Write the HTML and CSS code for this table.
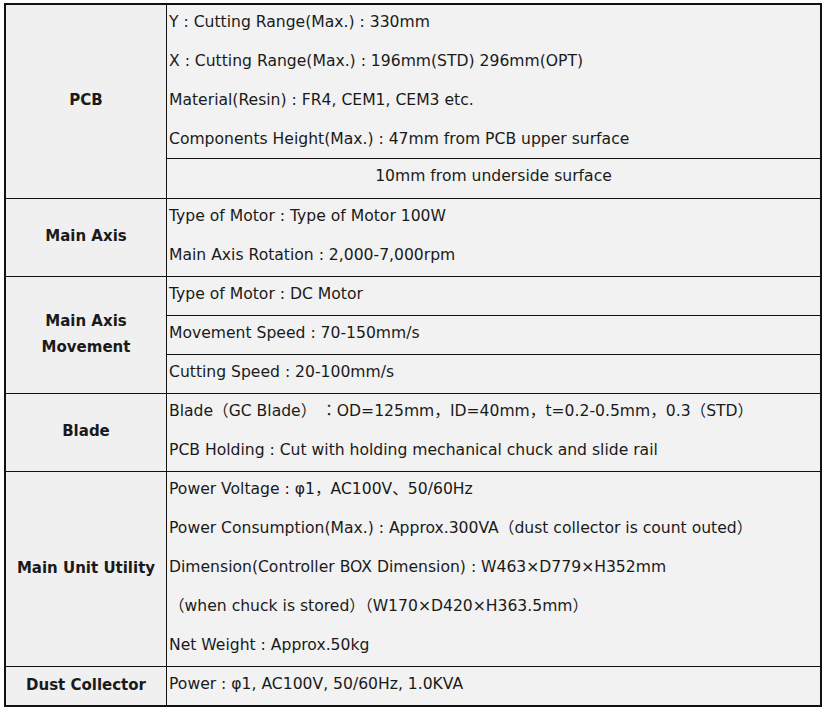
FILE: index.html
```html
<!DOCTYPE html>
<html>
<head>
<meta charset="utf-8">
<link rel="stylesheet" href="styles.css">
</head>
<body>
<table class="spec">
  <tr>
    <th rowspan="2">PCB</th>
    <td class="first">
      <div class="ln">Y : Cutting Range(Max.) : 330mm</div>
      <div class="ln">X : Cutting Range(Max.) : 196mm(STD) 296mm(OPT)</div>
      <div class="ln">Material(Resin) : FR4, CEM1, CEM3 etc.</div>
      <div class="ln">Components Height(Max.) : 47mm from PCB upper surface</div>
    </td>
  </tr>
  <tr>
    <td class="center"><div class="ln">10mm from underside surface</div></td>
  </tr>
  <tr>
    <th>Main Axis</th>
    <td>
      <div class="ln">Type of Motor : Type of Motor 100W</div>
      <div class="ln">Main Axis Rotation : 2,000-7,000rpm</div>
    </td>
  </tr>
  <tr>
    <th rowspan="3" class="wrap">Main Axis<br>Movement</th>
    <td><div class="ln">Type of Motor : DC Motor</div></td>
  </tr>
  <tr>
    <td><div class="ln">Movement Speed : 70-150mm/s</div></td>
  </tr>
  <tr>
    <td><div class="ln">Cutting Speed : 20-100mm/s</div></td>
  </tr>
  <tr>
    <th>Blade</th>
    <td>
      <div class="ln">Blade（GC Blade） ：OD=125mm，ID=40mm，t=0.2-0.5mm，0.3（STD）</div>
      <div class="ln">PCB Holding : Cut with holding mechanical chuck and slide rail</div>
    </td>
  </tr>
  <tr>
    <th>Main Unit Utility</th>
    <td>
      <div class="ln">Power Voltage : φ1，AC100V、50/60Hz</div>
      <div class="ln">Power Consumption(Max.) : Approx.300VA（dust collector is count outed）</div>
      <div class="ln">Dimension(Controller BOX Dimension) : W463×D779×H352mm</div>
      <div class="ln">（when chuck is stored）（W170×D420×H363.5mm）</div>
      <div class="ln">Net Weight : Approx.50kg</div>
    </td>
  </tr>
  <tr>
    <th>Dust Collector</th>
    <td><div class="ln">Power : φ1, AC100V, 50/60Hz, 1.0KVA</div></td>
  </tr>
</table>
</body>
</html>
```

FILE: styles.css
```css
html, body {
  margin: 0;
  padding: 0;
  background: #ffffff;
}
body {
  padding: 3px 0 0 4px;
  font-family: "DejaVu Sans", "Noto Sans CJK JP", sans-serif;
  font-size: 15.6px;
  color: #1a1a1a;
}
.spec {
  border-collapse: collapse;
  width: 818px;
  border: 2px solid #111;
  background: #f2f2f2;
}
.spec th, .spec td {
  border: 1px solid #111;
  padding: 0 2px;
  vertical-align: middle;
}
.spec th {
  width: 156px;
  font-size: 15px;
  font-weight: bold;
  text-align: center;
  background: #f0f0f0;
  line-height: 26px;
  padding-bottom: 3px;
}
.spec td {
  text-align: left;
}
.spec td.center {
  text-align: center;
}
.ln {
  height: 39px;
  line-height: 34px;
  white-space: nowrap;
}
.ln:last-child {
  height: 38px;
}
.first .ln:last-child {
  height: 36px;
}
.center .ln:last-child {
  height: 39px;
}
```
